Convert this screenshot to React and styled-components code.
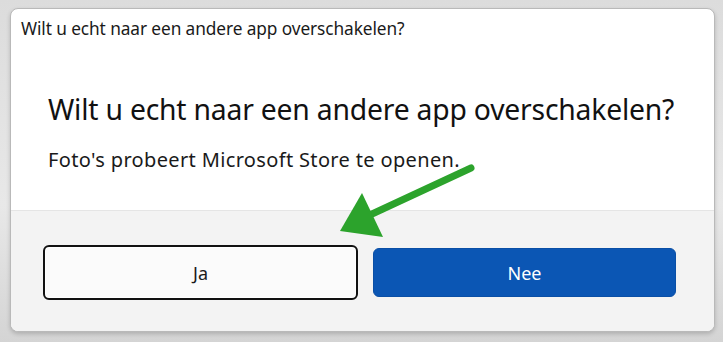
import React from 'react';
import styled, { createGlobalStyle } from 'styled-components';

const GlobalStyle = createGlobalStyle`
  html, body {
    margin: 0;
    padding: 0;
    background: #e2e2e2;
  }
  body {
    font-family: "Noto Sans", "Open Sans", sans-serif;
  }
`;

const Page = styled.div`
  width: 723px;
  height: 342px;
  box-sizing: border-box;
  padding: 8px 8px 10px 10px;
  background: linear-gradient(180deg, #dcdcdc 0%, #e8e8e8 60%, #d4d4d4 100%);
  position: relative;
`;

const Dialog = styled.div`
  height: 100%;
  box-sizing: border-box;
  border: 1px solid #b9b9b9;
  border-radius: 8px;
  background: #ffffff;
  overflow: hidden;
  display: flex;
  flex-direction: column;
  box-shadow: 0 2px 4px rgba(0, 0, 0, 0.18);
`;

const TitleBar = styled.div`
  height: 34px;
  padding: 8px 0 0 10px;
  box-sizing: border-box;
  font-size: 17.3px;
  line-height: 23px;
  color: #1a1a1a;
  letter-spacing: -0.1px;
`;

const Body = styled.div`
  flex: 1;
  padding: 49px 30px 0 37px;
`;

const Heading = styled.h1`
  margin: 0;
  font-size: 28.3px;
  line-height: 34px;
  font-weight: 400;
  color: #111;
  letter-spacing: -0.2px;
  white-space: nowrap;
`;

const Message = styled.p`
  margin: 21px 0 0;
  font-size: 20px;
  line-height: 25px;
  color: #1a1a1a;
  letter-spacing: 0.35px;
`;

const Footer = styled.div`
  height: 121px;
  box-sizing: border-box;
  background: #f3f3f3;
  border-top: 1px solid #e5e5e5;
  padding: 34px 0 0 32px;
  display: grid;
  grid-template-columns: 315px 303px;
  column-gap: 15px;
  align-items: start;
`;

const Button = styled.button`
  height: ${p => (p.$primary ? '49px' : '55px')};
  margin-top: ${p => (p.$primary ? '3px' : '0')};
  border-radius: 6px;
  font-family: inherit;
  font-size: 18px;
  cursor: pointer;
  border: ${p => (p.$primary ? '1px solid #0a4fa6' : '2px solid #111')};
  background: ${p => (p.$primary ? '#0b56b4' : '#fbfbfb')};
  color: ${p => (p.$primary ? '#fff' : '#1a1a1a')};
  box-shadow: ${p => (p.$primary ? 'none' : 'inset 0 0 0 1px #fff')};
`;

const Arrow = styled.svg`
  position: absolute;
  left: 0;
  top: 0;
  pointer-events: none;
`;

export default function App() {
  return (
    <>
      <GlobalStyle />
      <Page>
        <Dialog>
          <TitleBar>Wilt u echt naar een andere app overschakelen?</TitleBar>
          <Body>
            <Heading>Wilt u echt naar een andere app overschakelen?</Heading>
            <Message>Foto's probeert Microsoft Store te openen.</Message>
          </Body>
          <Footer>
            <Button>Ja</Button>
            <Button $primary>Nee</Button>
          </Footer>
        </Dialog>
        <Arrow width="723" height="342" viewBox="0 0 723 342">
          <line x1="471" y1="168" x2="372" y2="214" stroke="#2ca32c" strokeWidth="7" strokeLinecap="round" />
          <polygon points="340,231 362,193 383,237" fill="#2ca32c" />
        </Arrow>
      </Page>
    </>
  );
}
